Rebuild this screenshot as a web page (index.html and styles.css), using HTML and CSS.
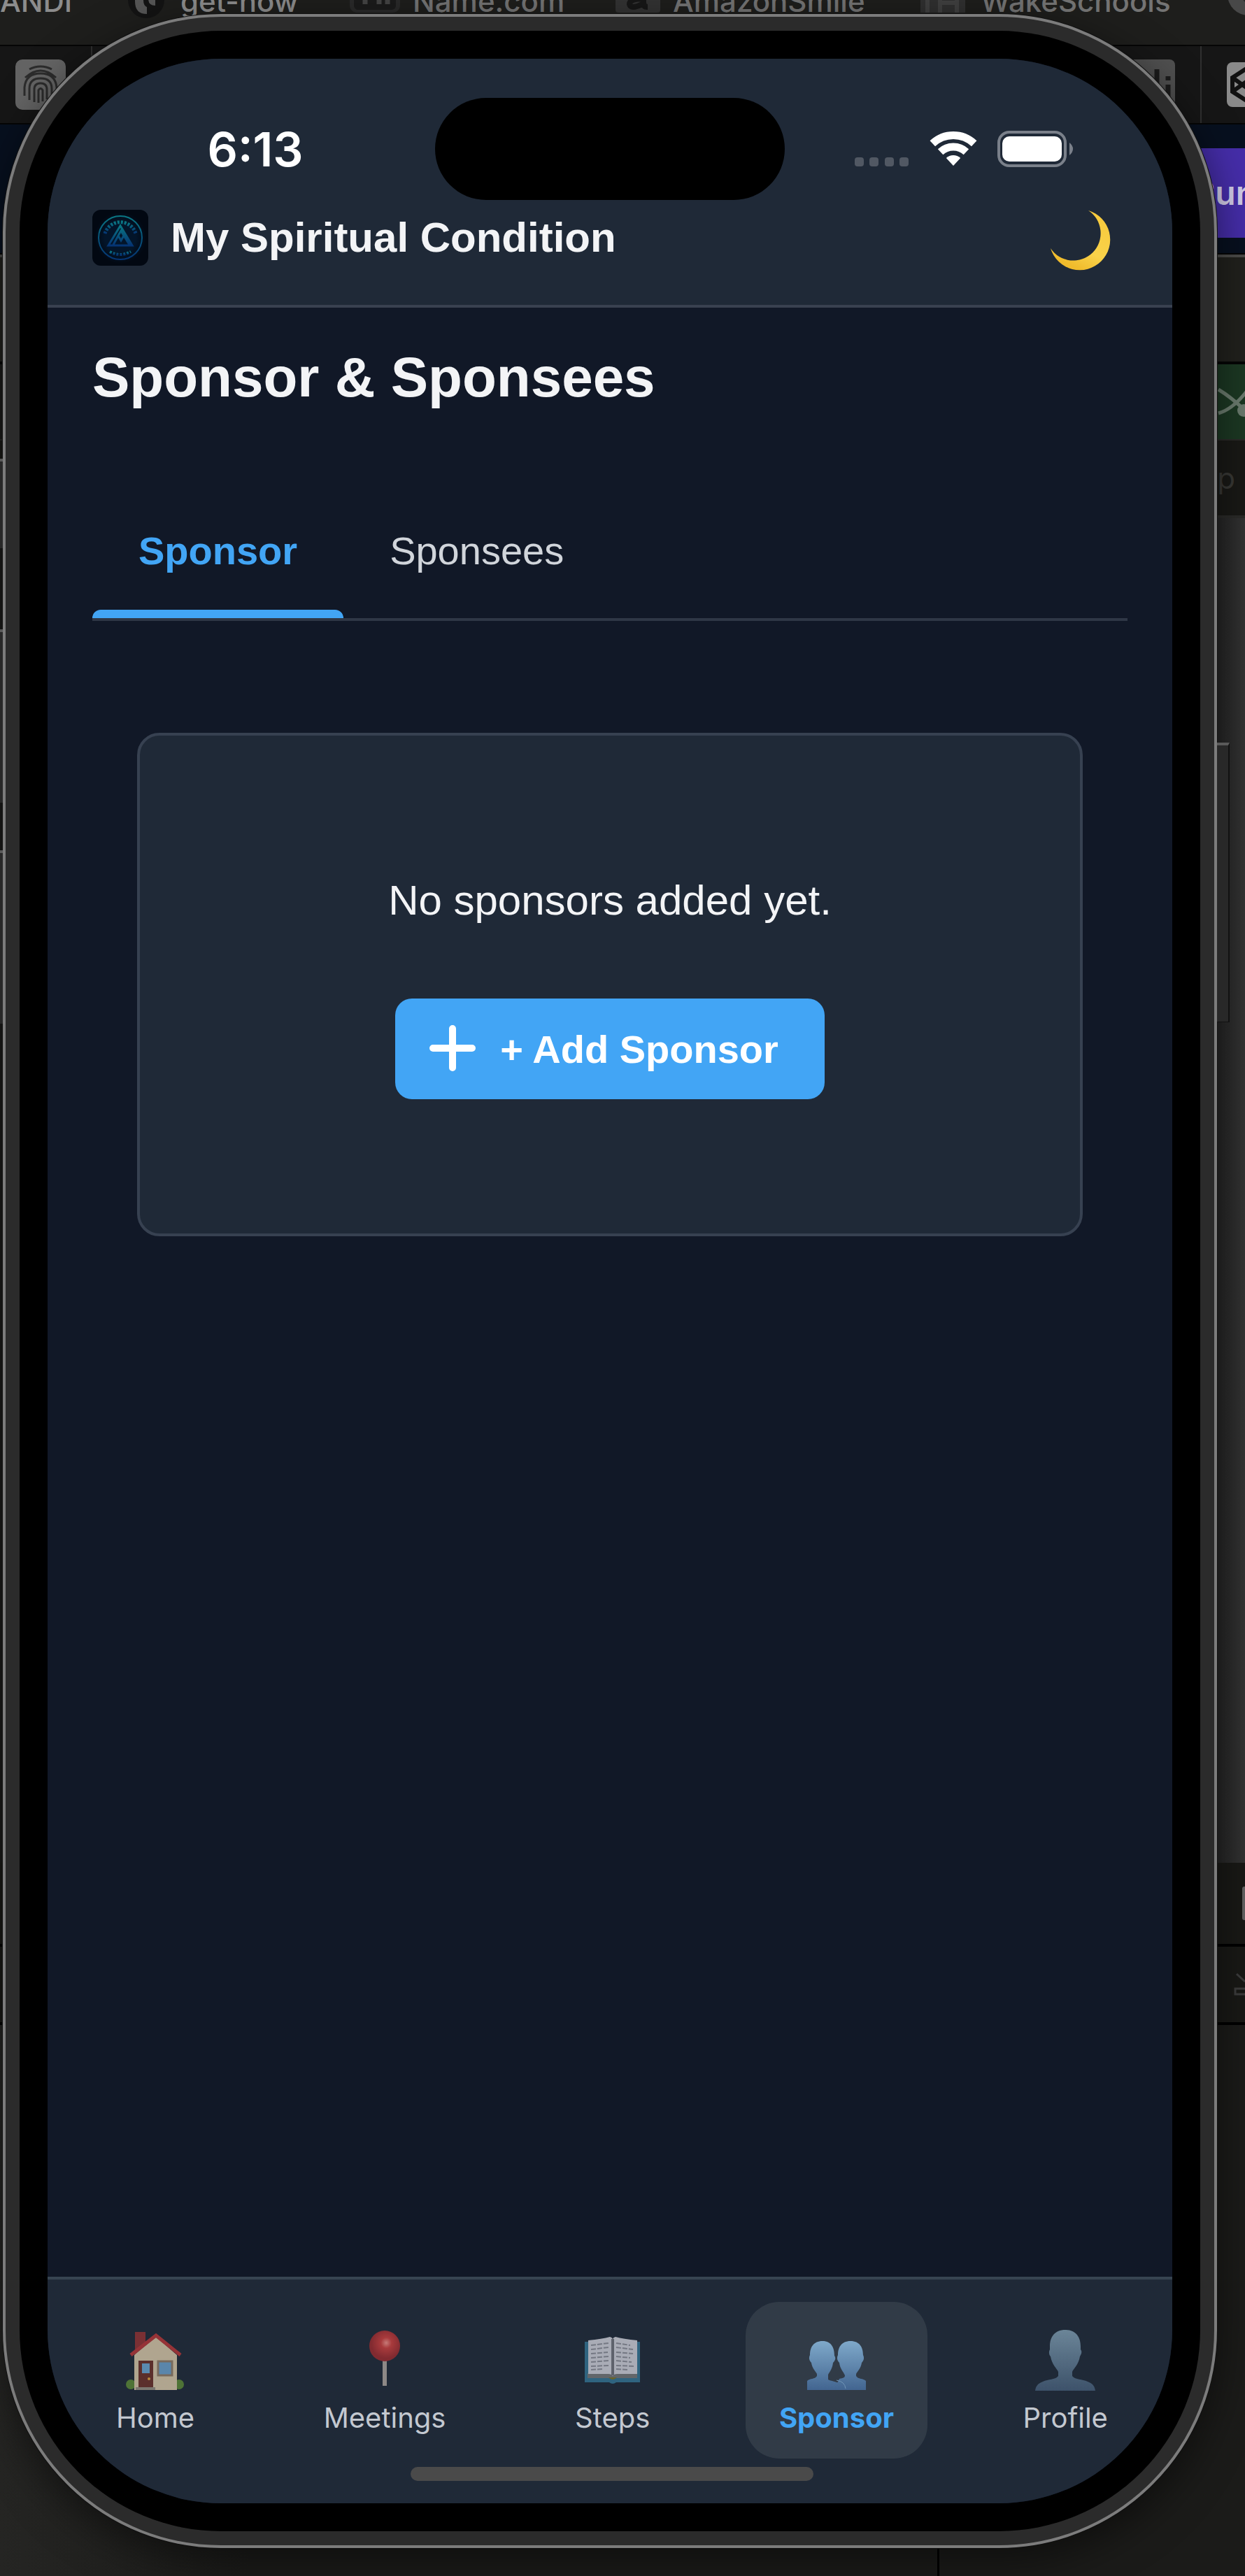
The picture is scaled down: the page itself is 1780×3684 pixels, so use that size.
FILE: index.html
```html
<!DOCTYPE html>
<html lang="en">
<head>
<meta charset="utf-8">
<meta name="viewport" content="width=device-width, initial-scale=1">
<title>My Spiritual Condition</title>
<link rel="stylesheet" href="styles.css">
</head>
<body>
<!-- Desktop behind the simulator -->
<div class="desktop" aria-hidden="true">
  <div class="bookmarks">
    <span class="bookmark bright">ANDI</span>
    <span class="bookmark bright"><svg class="favicon" width="58" height="60" viewBox="0 0 58 60"><circle cx="27" cy="30" r="26" fill="#131313"/><path d="M11 4h12v26q0 8 5 10v10q-17 0-17-18zM30 4h10v34q-10 0-10-10z" fill="#555"/></svg>get-now</span>
    <span class="bookmark"><svg class="favicon" width="72" height="48" viewBox="0 0 72 48"><rect width="72" height="48" rx="10" fill="#2a2a2a"/><rect x="6" width="60" height="44" rx="6" fill="#1b1b1b"/><path d="M22 36V16h10q10 0 10 10v10M54 30v6" fill="none" stroke="#444" stroke-width="7"/></svg>Name.com</span>
    <span class="bookmark"><svg class="favicon" width="64" height="48" viewBox="0 0 64 48"><rect width="64" height="48" rx="4" fill="#333"/><path d="M22 22q10-8 18 0v12q0 6 6 6M40 28q-20 0-20 8 2 8 18 0" fill="none" stroke="#171717" stroke-width="8"/></svg>AmazonSmile</span>
    <span class="bookmark"><svg class="favicon" width="68" height="48" viewBox="0 0 68 48"><path fill="#303030" d="M0 0h64v48H0z"/><path d="M10 0v48M28 0v48M52 0v48M28 34h24" stroke="#404040" stroke-width="6"/></svg>WakeSchools</span>
    <span class="bookmark"><svg class="favicon" width="60" height="54" viewBox="0 0 60 54"><circle cx="30" cy="22" r="30" fill="#484848"/><circle cx="34" cy="22" r="14" fill="#262626"/></svg></span>
  </div>
  <div class="pinned">
    <svg class="tile" viewBox="0 0 72 72"><rect width="72" height="72" rx="10" fill="#646464"/><g fill="none" stroke="#2c2c2c" stroke-width="3"><path d="M20 14q16-8 32 0M14 26q22-20 44 0M13 52V40q2-20 23-20t23 20v6M20 58V42q0-15 16-15t16 15v8M27 61V43q0-9 9-9t9 9v14M33 62V44q3-5 6 0v16"/></g></svg>
    <i class="rule"></i>
    <i class="stretch"></i>
    <svg class="tile" viewBox="0 0 72 72"><rect width="72" height="72" rx="8" fill="#505050"/><path d="M46 14v34M62 36v20M62 24v6" stroke="#1c1c1c" stroke-width="7"/></svg>
    <i class="rule"></i>
    <svg class="tile edge" viewBox="0 0 72 72"><rect y="4" width="72" height="64" rx="8" fill="#8a8a8a"/><path d="M8 26 36 8l28 18v20L36 64 8 46zM8 26l28 20 28-20M8 46l28-20 28 20" fill="none" stroke="#111" stroke-width="6"/></svg>
  </div>
  <div class="navy"><span class="run">Run</span></div>
  <div class="band olive"></div>
  <div class="band green"><svg width="60" height="60" viewBox="0 0 60 60"><path d="M2 12q20 12 42 34M2 46Q24 40 46 10" fill="none" stroke="#6b7b6e" stroke-width="5"/><circle cx="38" cy="42" r="9" fill="#6b7b6e"/></svg></div>
  <div class="band label">p</div>
  <div class="band panel"></div>
  <div class="band row"><svg width="4" height="48" viewBox="0 0 4 48"><rect width="8" height="48" rx="3" fill="#626262"/></svg></div>
  <div class="band row tall"><svg width="16" height="32" viewBox="0 0 16 32"><path d="M4 1 16 12M20 22H2v8h18" fill="none" stroke="#3c3c3c" stroke-width="3"/></svg></div>
  <div class="band rest"><i class="seam"></i></div>
</div>

<div class="device">
  <i class="key action"></i><i class="key up"></i><i class="key down"></i><i class="key power"></i>
  <div class="bezel">
    <div class="screen">
      <header class="header">
        <div class="status">
          <time class="clock">6:13</time>
          <span class="island"></span>
          <div class="signals">
            <svg width="78" height="14" viewBox="0 0 78 14" fill="#515863"><rect width="13" height="13" rx="4"/><rect x="21" width="13" height="13" rx="4"/><rect x="43" width="13" height="13" rx="4"/><rect x="64" width="13" height="13" rx="4"/></svg>
            <svg width="68" height="52" viewBox="0 0 68 52" fill="none" stroke="#fff" stroke-width="11"><path d="M4.300 18.200A43.500 43.500 0 0 1 63.700 18.200M15.600 30.300A27 27 0 0 1 52.400 30.300"/><path d="M34 50 23.800 39A15 15 0 0 1 44.200 39Z" fill="#fff" stroke="none"/></svg>
            <svg width="110" height="52" viewBox="0 0 110 52"><rect x="2" y="2" width="95" height="48" rx="15" fill="none" stroke="#7a808a" stroke-width="4"/><rect x="7" y="8" width="85" height="36" rx="10" fill="#fff"/><path d="M103 17q5 4 5 9t-5 9z" fill="#7a808a"/></svg>
          </div>
        </div>
        <div class="brand">
          <svg class="logo" viewBox="0 0 80 80"><defs><linearGradient id="ring" x1="0" y1="0" x2="0" y2="1"><stop offset="0" stop-color="#0a7683"/><stop offset="1" stop-color="#053473"/></linearGradient><radialGradient id="glow"><stop offset="0.600" stop-color="#03152a"/><stop offset="1" stop-color="#020812"/></radialGradient></defs><rect width="80" height="80" rx="12" fill="#020812"/><circle cx="40" cy="40" r="37" fill="url(#glow)"/><g fill="none" stroke="url(#ring)"><circle cx="40" cy="40" r="31" stroke-width="2"/><path d="M18 34a23 23 0 0 1 44 0" stroke-width="5" stroke-dasharray="3 2"/><path d="M25 60q15 8 30 0" stroke-width="4" stroke-dasharray="3 2"/><path d="M40 23 23 51h34zM30 50l7-13 4 7 4-7 8 13M37 37l4-7 4 7" stroke-width="3"/></g></svg>
          <span class="app-name">My Spiritual Condition</span>
          <button class="theme" type="button" aria-label="Toggle dark mode">
            <svg width="88" height="88" viewBox="0 0 88 88"><defs><linearGradient id="moon" x1="1" y1="0" x2="0.500" y2="1"><stop offset="0" stop-color="#f6c83a"/><stop offset="0.700" stop-color="#f9d24a"/><stop offset="1" stop-color="#f0bb2c"/></linearGradient></defs><path d="M56 1A43.500 43.500 0 1 1 2 55A39 39 0 1 0 56 1Z" fill="url(#moon)"/></svg>
          </button>
        </div>
      </header>

      <main class="content">
        <h1 class="title">Sponsor &amp; Sponsees</h1>
        <div class="tabs" role="tablist">
          <button class="tab selected" type="button" role="tab" aria-selected="true">Sponsor</button>
          <button class="tab" type="button" role="tab" aria-selected="false">Sponsees</button>
        </div>
        <section class="card">
          <p class="empty">No sponsors added yet.</p>
          <button class="add" type="button">
            <svg width="80" height="80" viewBox="0 0 80 80"><path d="M40 11v56M12 39h56" stroke="#fff" stroke-width="10" stroke-linecap="round"/></svg>
            + Add Sponsor
          </button>
        </section>
      </main>

      <footer class="dock">
        <nav class="nav">
          <a class="item" href="#home">
            <svg class="icon" viewBox="0 0 88 88"><path d="M15 3h15v20L15 36z" fill="#7a3034"/><path d="M14 36 45 10l30 26v48H14z" fill="#b0a58f"/><path d="M9 36 45 8l35 28" fill="none" stroke="#963337" stroke-width="5"/><circle cx="9" cy="78" r="7" fill="#4e7336"/><circle cx="78" cy="78" r="7" fill="#4e7336"/><path d="M14 70h61v16H14z" fill="#b0a58f"/><path d="M20 44h21v38H20z" fill="#5b2f2c"/><path d="M25 48h11v14H25z" fill="#5a8ab0"/><circle cx="35" cy="70" r="2" fill="#b98a3c"/><path d="M16 82h28v4H16z" fill="#7b7770"/><path d="M48 45h20v20H48z" fill="#5a86ab" stroke="#786a5c" stroke-width="3"/></svg>
            <span>Home</span>
          </a>
          <a class="item" href="#meetings">
            <svg class="icon" viewBox="0 0 88 88"><defs><radialGradient id="ball" cx="0.550" cy="0.400"><stop offset="0" stop-color="#c67a78"/><stop offset="0.350" stop-color="#a83a3c"/><stop offset="1" stop-color="#812a30"/></radialGradient></defs><path d="M41 40h6v40h-6z" fill="#8d8886"/><circle cx="44" cy="23" r="22" fill="url(#ball)"/></svg>
            <span>Meetings</span>
          </a>
          <a class="item" href="#steps">
            <svg class="icon" viewBox="0 0 88 88"><path d="M4 17h79v58H49q-5 4-10 0H4z" fill="#2f6480"/><path d="M8 62h71v7H8z" fill="#62666a"/><path d="M9 15q20-2 31-5 4 1 4 4 0-3 4-4 11 3 31 5v48H50q-4 0-6 3-2-3-6-3H9z" fill="#a9acb6"/><path d="M44 13v52" stroke="#5e626c" stroke-width="4"/><path d="M38 68h12q-6 6-12 0z" fill="#6b6428"/><path d="M13 22l25-3M13 28l25-3M13 34l24-2M13 40l25-2M13 46l25-2M13 52l25-1M13 57l17-1M49 19l20 3M49 25l24 3M49 32l24 2M49 38l20 2M49 44l22 2M49 51l26 1M49 56l16 1" stroke="#747883" stroke-width="2" stroke-dasharray="7 2"/></svg>
            <span>Steps</span>
          </a>
          <a class="item current" href="#sponsor" aria-current="page">
            <svg class="icon" viewBox="0 0 88 88"><defs><linearGradient id="pair" x1="0" y1="16" x2="0" y2="86" gradientUnits="userSpaceOnUse"><stop offset="0" stop-color="#7fa9ca"/><stop offset="1" stop-color="#426590"/></linearGradient></defs><g fill="url(#pair)"><path d="M24 16c13 0 17 10 17 21 3 4 0 8-2 10-1 9-5 13-7 17v7c4 3 20 2 22 15H2V73c4-4 11-2 14-7v-3c-2-4-7-8-8-16-3-3-4-7-2-11C6 25 11 16 24 16z"/><path d="M64 16c13 0 18 9 18 20 2 4 1 8-2 11-1 8-6 12-8 16v3c3 5 10 3 14 7v13H40l8-16c6-1 8-2 8-5-2-5-7-9-8-18-3-3-4-7-2-11 0-11 5-20 18-20z"/></g><path d="M44 72q12 2 13 12" fill="none" stroke="#7297b8" stroke-width="1"/></svg>
            <span>Sponsor</span>
          </a>
          <a class="item" href="#profile">
            <svg class="icon" viewBox="0 0 88 88"><defs><linearGradient id="solo" x1="0" y1="0" x2="0" y2="1"><stop offset="0" stop-color="#6b8598"/><stop offset="1" stop-color="#3d526a"/></linearGradient></defs><path d="M44 0c15 0 22 10 22 24v4c3 4 0 8-1 10-2 12-9 17-11 22v6c5 6 14 4 22 8 8 3 10 7 11 13H1c1-6 3-10 11-13 8-4 17-2 22-8v-6c-2-5-9-10-11-22-2-2-3-6-1-10v-4C22 10 29 0 44 0z" fill="url(#solo)"/></svg>
            <span>Profile</span>
          </a>
        </nav>
        <span class="grabber"></span>
      </footer>
    </div>
  </div>
</div>
</body>
</html>
```
FILE: styles.css
```css
* { box-sizing: border-box; }

body {
  margin: 0;
  position: relative;
  display: flex;
  background: #1b1b19;
  font-family: "Liberation Sans", Arial, sans-serif;
}

button {
  border: 0;
  padding: 0;
  background: none;
  color: inherit;
  font: inherit;
}

svg { display: block; flex-shrink: 0; }
i { display: block; }

/* Desktop behind the simulator */
.desktop {
  position: absolute;
  inset: 0;
  overflow: hidden;
  display: flex;
  flex-direction: column;
  background: #1b1b19;
  font-family: Inter, sans-serif;
}

.bookmarks {
  display: grid;
  grid-template-columns: 182px 318px 380px 436px 439px 1fr;
  height: 66px;
  border-bottom: 2px solid #050505;
  background: #1e1e1c;
  overflow: hidden;
}

.bookmark {
  display: flex;
  gap: 18px;
  margin-top: -14px;
  color: #747474;
  font-size: 42px;
  font-weight: 500;
  line-height: 32px;
  white-space: nowrap;
}

.bright { color: #8c8c8c; }
.favicon { margin-top: -16px; }

.pinned {
  display: flex;
  align-items: center;
  gap: 36px;
  height: 112px;
  padding-left: 22px;
  border-bottom: 2px solid #050505;
  background: #161616;
}

.tile { width: 72px; height: 72px; }
.edge { margin-right: -46px; }
.rule { width: 2px; height: 100%; background: #303030; }
.stretch { flex: 1; }

.navy {
  display: flex;
  justify-content: flex-end;
  align-items: flex-end;
  height: 186px;
  padding-bottom: 22px;
  border-bottom: 2px solid #050505;
  background: #07101f;
}

.run {
  width: 120px;
  padding-left: 46px;
  background: #452da8;
  color: #d0cbe6;
  font-size: 48px;
  font-weight: 600;
  line-height: 128px;
  overflow: hidden;
}

.band {
  display: flex;
  justify-content: flex-end;
  align-items: center;
}

.olive { height: 157px; border-top: 4px solid #4a4a48; border-bottom: 4px solid #050505; background: #21211d; }
.green { height: 107px; background: linear-gradient(90deg, #1b1b19 50%, #1c3823 50%); }
.green svg { margin-right: -20px; }

.label {
  height: 113px;
  padding-right: 14px;
  border-top: 2px solid #2a2a28;
  border-bottom: 4px solid #2a2a28;
  background: #191916;
  color: #383835;
  font-size: 42px;
}

.panel { height: 1923px; background: linear-gradient(90deg, #1b1b19 50%, #262626 50%, #262626 98%, #333); }
.row { height: 120px; border-bottom: 4px solid #000; background: #191916; }
.tall { height: 112px; }
.rest { flex: 1; align-items: flex-end; background: linear-gradient(90deg, #252523, #1b1b19 20%); }
.seam { width: 440px; height: 40px; border-left: 3px solid #000; }

/* Simulator hardware */
.device {
  position: relative;
  flex: 1;
  display: flex;
  min-height: calc(100vh - 60px);
  margin: 20px 40px 40px 4px;
  border: 4px solid #7c7c7c;
  border-radius: 312px;
  padding: 20px;
  background: #2b2b2b;
  box-shadow: 0 0 0 1px #111, 0 16px 60px rgba(0, 0, 0, 0.5);
}

.key {
  position: absolute;
  left: -8px;
  width: 4px;
  border-top: 4px solid #5a5a5a;
  background: #282828;
}

.action { top: 632px; height: 128px; }
.up { top: 876px; height: 248px; }
.down { top: 1192px; height: 248px; }

.power {
  top: 1038px;
  left: auto;
  right: -22px;
  width: 18px;
  height: 400px;
  border-right: 2px solid #111;
  border-bottom: 1px solid #111;
}

.bezel {
  flex: 1;
  display: flex;
  border-radius: 288px;
  padding: 40px;
  background: #000;
}

.screen {
  flex: 1;
  display: flex;
  flex-direction: column;
  border-radius: 248px;
  background: #111827;
  overflow: hidden;
}

/* Header */
.header {
  padding: 56px 64px;
  border-bottom: 4px solid #394150;
  background: #1f2937;
}

.status {
  display: grid;
  grid-template-columns: 1fr 500px 1fr;
  align-items: center;
  height: 146px;
  margin: 0 -24px 14px;
}

.clock {
  justify-self: center;
  color: #fff;
  font: 600 68px/80px Inter, sans-serif;
}

.island { height: 146px; border-radius: 73px; background: #000; }

.signals {
  display: flex;
  justify-content: center;
  align-items: flex-end;
  gap: 29px;
}

.brand { display: flex; align-items: center; gap: 32px; }
.logo { width: 80px; height: 80px; }

.app-name {
  flex: 1;
  color: #f3f4f6;
  font-size: 60px;
  font-weight: 700;
  line-height: 80px;
}

.theme { height: 80px; margin-right: 24px; }

/* Content */
.content { flex: 1; padding: 52px 64px; }

.title {
  margin: 0 0 104px;
  color: #f3f4f6;
  font-size: 80px;
  line-height: 96px;
}

.tabs { display: flex; border-bottom: 4px solid #2f3746; }

.tab {
  position: relative;
  padding: 64px 66px;
  color: #d1d5db;
  font-size: 56px;
  line-height: 64px;
}

.selected { color: #42a5f5; font-weight: 700; }

.selected::after {
  content: "";
  position: absolute;
  inset: auto 0 0;
  height: 12px;
  border-radius: 12px 12px 0 0;
  background: #42a5f5;
}

.card {
  display: flex;
  flex-direction: column;
  align-items: center;
  margin: 160px 64px 0;
  border: 4px solid #374151;
  border-radius: 32px;
  padding: 200px 64px 192px;
  background: #1f2937;
}

.empty {
  margin: 0 0 104px;
  color: #f3f4f6;
  font-size: 60px;
  line-height: 72px;
}

.add {
  display: flex;
  align-items: center;
  gap: 28px;
  height: 144px;
  padding: 0 66px 0 42px;
  border-radius: 24px;
  background: #42a5f5;
  color: #fff;
  font-size: 56px;
  font-weight: 700;
}

/* Bottom navigation */
.dock {
  padding: 32px 44px 32px 50px;
  border-top: 4px solid #374451;
  background: #1f2937;
}

.nav { display: flex; justify-content: space-between; }

.item {
  display: flex;
  flex-direction: column;
  align-items: center;
  gap: 14px;
  padding: 40px 48px 34px;
  border-radius: 48px;
  color: #c3c8d0;
  font: 400 40px/48px Inter, sans-serif;
  text-decoration: none;
}

.current { background: #313b47; color: #42a5f5; font-weight: 700; }
.icon { width: 88px; height: 88px; }

.grabber {
  display: block;
  width: 576px;
  height: 20px;
  margin: 12px auto 0;
  border-radius: 10px;
  background: #4a4a4a;
}
```
